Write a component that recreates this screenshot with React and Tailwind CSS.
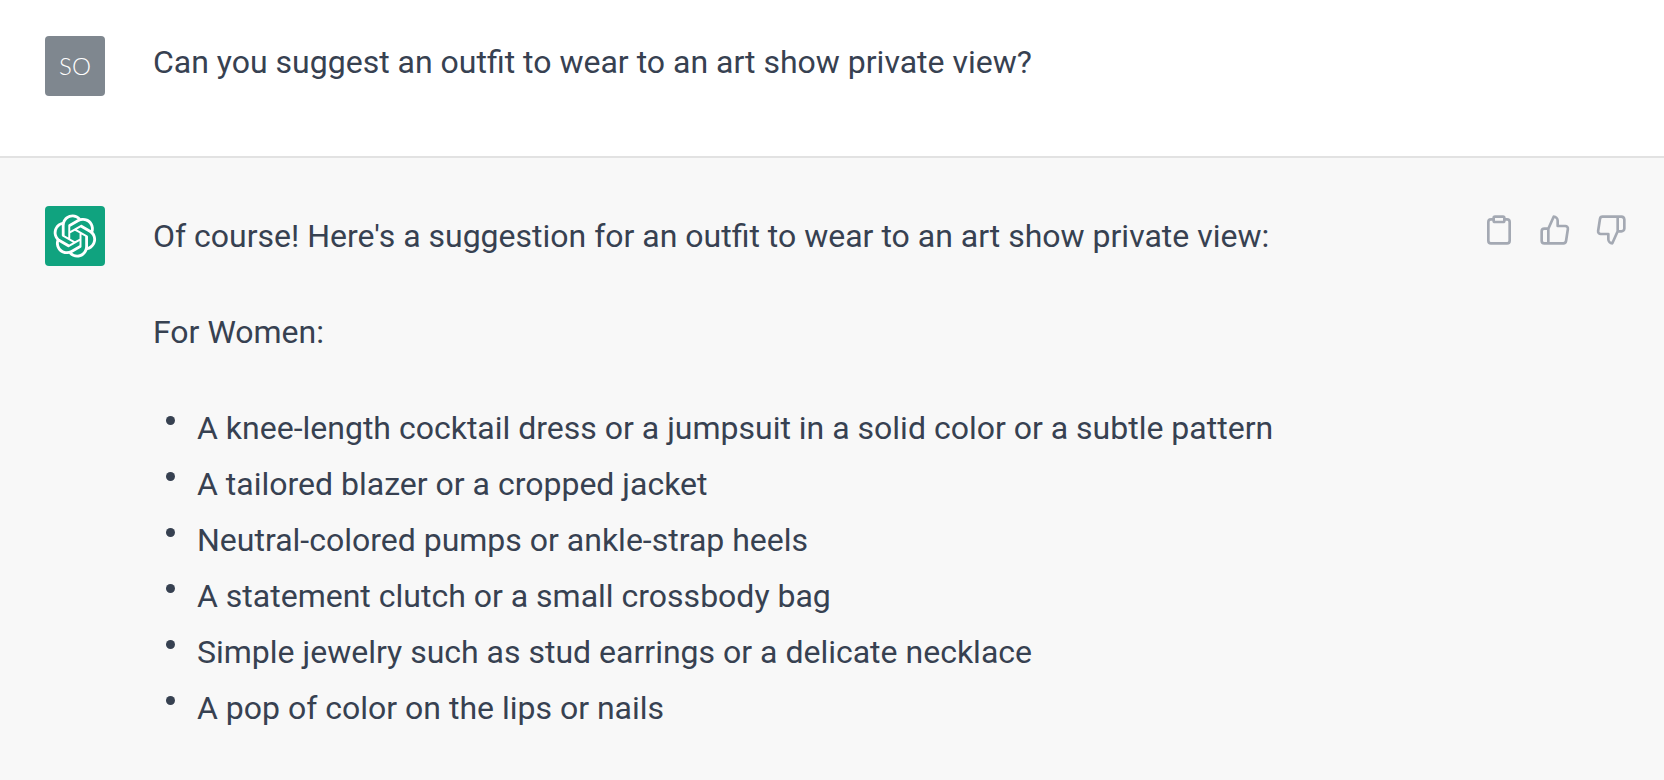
import { FiClipboard, FiThumbsUp, FiThumbsDown } from "react-icons/fi";

const outfitItems = [
  "A knee-length cocktail dress or a jumpsuit in a solid color or a subtle pattern",
  "A tailored blazer or a cropped jacket",
  "Neutral-colored pumps or ankle-strap heels",
  "A statement clutch or a small crossbody bag",
  "Simple jewelry such as stud earrings or a delicate necklace",
  "A pop of color on the lips or nails",
];

const actions = [
  { label: "Copy", Icon: FiClipboard },
  { label: "Good response", Icon: FiThumbsUp },
  { label: "Bad response", Icon: FiThumbsDown },
];

function AssistantLogo() {
  return (
    <svg viewBox="0 0 41 41" className="size-11" fill="currentColor" aria-hidden="true">
      <path d="M37.532 16.8707C37.9808 15.5241 38.1363 14.0974 37.9886 12.6859C37.8409 11.2744 37.3934 9.91076 36.676 8.68622C35.6126 6.83404 33.9882 5.3676 32.0373 4.4985C30.0864 3.62941 27.9098 3.40259 25.8215 3.85078C24.8796 2.7893 23.7219 1.94125 22.4257 1.36341C21.1295 0.785575 19.7249 0.491269 18.3058 0.500197C16.1708 0.495044 14.0893 1.16803 12.3614 2.42214C10.6335 3.67624 9.34853 5.44666 8.6917 7.47815C7.30085 7.76286 5.98686 8.3414 4.8377 9.17505C3.68854 10.0087 2.73073 11.0782 2.02839 12.312C0.956464 14.1591 0.498905 16.2988 0.721698 18.4228C0.944492 20.5467 1.83612 22.5449 3.268 24.1293C2.81966 25.4759 2.66413 26.9026 2.81182 28.3141C2.95951 29.7256 3.40701 31.0892 4.12437 32.3138C5.18791 34.1659 6.8123 35.6322 8.76321 36.5013C10.7141 37.3704 12.8907 37.5973 14.9789 37.1492C15.9208 38.2107 17.0786 39.0587 18.3747 39.6366C19.6709 40.2144 21.0755 40.5087 22.4946 40.4998C24.6307 40.5054 26.7133 39.8321 28.4418 38.5772C30.1704 37.3223 31.4556 35.5506 32.1119 33.5179C33.5027 33.2332 34.8167 32.6547 35.9659 31.821C37.115 30.9874 38.0728 29.9178 38.7752 28.684C39.8458 26.8371 40.3023 24.6979 40.0789 22.5748C39.8556 20.4517 38.9639 18.4544 37.532 16.8707ZM22.4978 37.8849C20.7443 37.8874 19.0459 37.2733 17.6994 36.1501C17.7601 36.117 17.8666 36.0586 17.936 36.0161L25.9004 31.4156C26.1003 31.3019 26.2663 31.137 26.3813 30.9378C26.4964 30.7386 26.5563 30.5124 26.5549 30.2825V19.0542L29.9213 20.998C29.9389 21.0068 29.9541 21.0198 29.9656 21.0359C29.977 21.052 29.9842 21.0707 29.9867 21.0902V30.3889C29.9842 32.375 29.1946 34.2791 27.7909 35.6841C26.3872 37.0892 24.4838 37.8806 22.4978 37.8849ZM6.39227 31.0064C5.51397 29.4888 5.19742 27.7107 5.49804 25.9832C5.55718 26.0187 5.66048 26.0818 5.73461 26.1244L13.699 30.7248C13.8975 30.8408 14.1233 30.902 14.3532 30.902C14.583 30.902 14.8088 30.8408 15.0073 30.7248L24.731 25.1103V28.9979C24.7321 29.0177 24.7283 29.0376 24.7199 29.0556C24.7115 29.0736 24.6988 29.0893 24.6829 29.1012L16.6317 33.7497C14.9096 34.7416 12.8643 35.0097 10.9447 34.4954C9.02506 33.9811 7.38785 32.7263 6.39227 31.0064ZM4.29707 13.6194C5.17156 12.0998 6.55279 10.9364 8.19885 10.3327C8.19885 10.4013 8.19491 10.5228 8.19491 10.6071V19.808C8.19351 20.0378 8.25334 20.2638 8.36823 20.4629C8.48312 20.6619 8.64893 20.8267 8.84863 20.9404L18.5723 26.5542L15.206 28.4979C15.1894 28.5089 15.1703 28.5155 15.1505 28.5173C15.1307 28.5191 15.1107 28.516 15.0924 28.5082L7.04046 23.8557C5.32135 22.8601 4.06716 21.2235 3.55289 19.3046C3.03862 17.3858 3.30624 15.3413 4.29707 13.6194ZM31.955 20.0556L22.2312 14.4411L25.5976 12.4981C25.6142 12.4872 25.6333 12.4805 25.6531 12.4787C25.6729 12.4769 25.6928 12.4801 25.7111 12.4879L33.7631 17.1364C34.9967 17.849 36.0017 18.8982 36.6606 20.1613C37.3194 21.4244 37.6047 22.849 37.4832 24.2684C37.3617 25.6878 36.8382 27.0432 35.9743 28.1759C35.1103 29.3086 33.9415 30.1717 32.6047 30.6641C32.6047 30.5947 32.6047 30.4733 32.6047 30.3889V21.188C32.6066 20.9586 32.5474 20.7328 32.4332 20.5338C32.319 20.3348 32.154 20.1698 31.955 20.0556ZM35.3055 15.0128C35.2464 14.9765 35.1431 14.9142 35.069 14.8717L27.1045 10.2712C26.906 10.1554 26.6803 10.0943 26.4504 10.0943C26.2206 10.0943 25.9948 10.1554 25.7963 10.2712L16.0726 15.8858V11.9982C16.0715 11.9783 16.0753 11.9585 16.0837 11.9405C16.0921 11.9225 16.1048 11.9068 16.1207 11.8949L24.1719 7.25025C25.4053 6.53903 26.8158 6.19376 28.2383 6.25482C29.6608 6.31589 31.0364 6.78077 32.2044 7.59508C33.3723 8.40939 34.2842 9.53945 34.8334 10.8531C35.3826 12.1667 35.5464 13.6095 35.3055 15.0128ZM14.2424 21.9419L10.8752 19.9981C10.8576 19.9893 10.8423 19.9763 10.8309 19.9602C10.8195 19.9441 10.8122 19.9254 10.8098 19.9058V10.6071C10.8107 9.18295 11.2173 7.78848 11.9819 6.58696C12.7466 5.38544 13.8377 4.42659 15.1275 3.82264C16.4173 3.21869 17.8524 2.99464 19.2649 3.1767C20.6775 3.35876 22.0089 3.93941 23.1034 4.85067C23.0427 4.88379 22.937 4.94215 22.8668 4.98473L14.9024 9.58517C14.7025 9.69878 14.5366 9.86356 14.4215 10.0626C14.3065 10.2616 14.2466 10.4877 14.2479 10.7175L14.2424 21.9419ZM16.071 17.9991L20.4018 15.4978L24.7325 17.9975V22.9985L20.4018 25.4983L16.071 22.9985V17.9991Z" />
    </svg>
  );
}

function Avatar({ className, children }) {
  return (
    <div className={`flex size-15 shrink-0 items-center justify-center rounded-sm text-white ${className}`}>
      {children}
    </div>
  );
}

export default function App() {
  return (
    <main className="flex min-h-screen flex-col bg-white font-['Roboto','Liberation_Sans',sans-serif] text-[32px] leading-14 text-[#374151]">
      {/* User message */}
      <section className="flex gap-12 border-b-2 border-[#e2e2e2] px-[45px] pt-9 pb-15">
        <Avatar className="bg-[#7f878f]">
          <span className="font-['Lato',sans-serif] text-2xl leading-none font-light">SO</span>
        </Avatar>
        <p className="-mt-0.5 min-w-0 flex-1">Can you suggest an outfit to wear to an art show private view?</p>
      </section>

      {/* Assistant message */}
      <section className="flex flex-1 gap-12 bg-[#f8f8f8] pt-12 pr-[29px] pb-10 pl-[45px]">
        <Avatar className="bg-[#10a37f]">
          <AssistantLogo />
        </Avatar>
        <div className="flex min-w-0 flex-1 flex-col gap-10 pt-0.5">
          <p>Of course! Here's a suggestion for an outfit to wear to an art show private view:</p>
          <p>For Women:</p>
          <ul className="pl-[13px]">
            {outfitItems.map((item) => (
              <li key={item} className="flex gap-[22px]">
                <span className="mt-4 size-[9px] shrink-0 rounded-full bg-[#374151]" />
                <span>{item}</span>
              </li>
            ))}
          </ul>
        </div>
        <div className="flex items-start gap-2 text-[#a4a9b3]">
          {actions.map(({ label, Icon }) => (
            <button key={label} type="button" aria-label={label} className="rounded-md p-2">
              <Icon className="size-8" />
            </button>
          ))}
        </div>
      </section>
    </main>
  );
}
